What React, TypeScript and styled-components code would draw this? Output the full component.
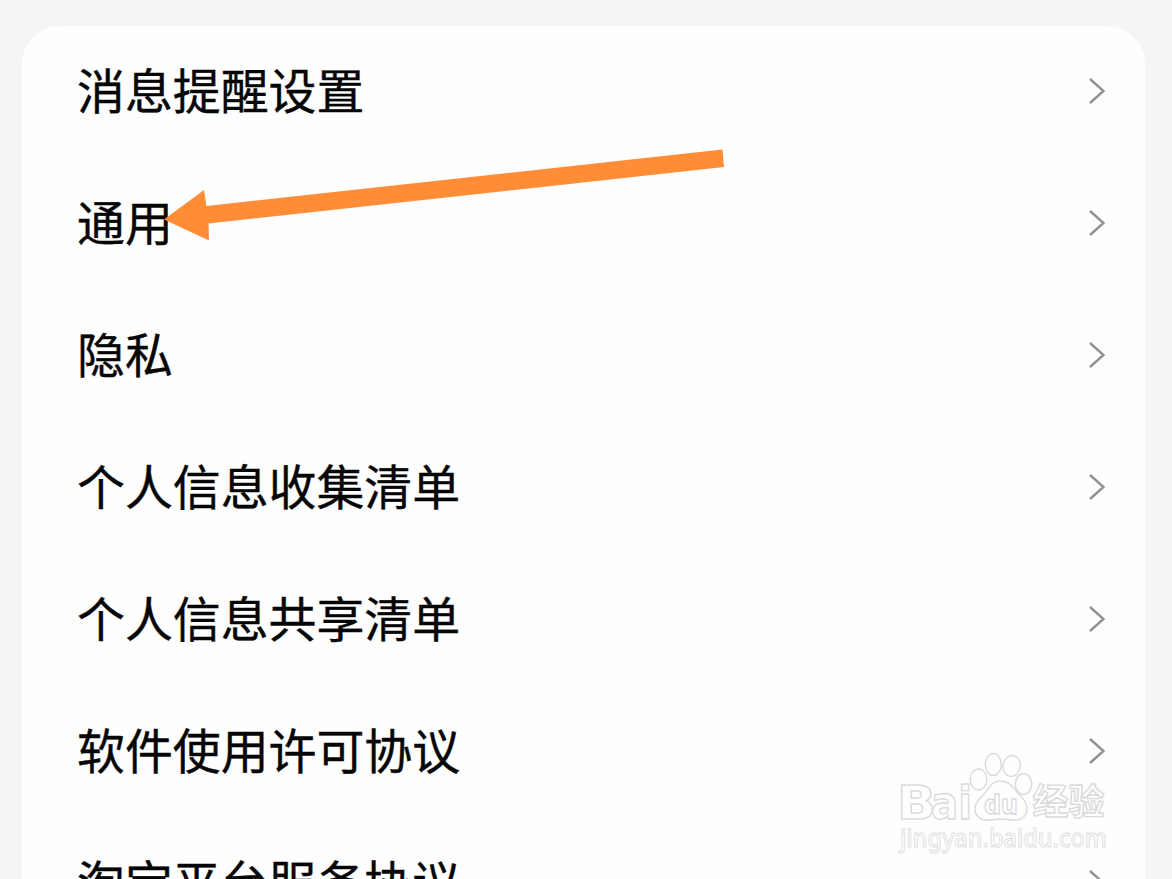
import React from "react";
import styled, { createGlobalStyle } from "styled-components";

const GlobalStyle = createGlobalStyle`
  body {
    margin: 0;
    background-color: #f5f5f5;
  }
`

const Root = styled.div`
  position: relative;
  box-sizing: border-box;
  width: 1172px;
  height: 879px;
  padding: 26px 27px 0 22px;
  overflow: hidden;
  background-color: #f5f5f5;
  font-family: "Noto Sans CJK SC", sans-serif;
`

const Card = styled.div`
  height: 1000px;
  border-radius: 38px 38px 0 0;
  background-color: #fefefe;
`

const Row = styled.div`
  display: flex;
  align-items: center;
  justify-content: space-between;
  box-sizing: border-box;
  height: 132px;
  padding: 0 39px 2px 55px;
`

const Label = styled.span`
  margin-bottom: 6px;
  color: #060606;
  font-size: 47.9px;
  line-height: 72px;
  white-space: nowrap;
  -webkit-text-stroke: 0.4px #060606;
`

const Chevron = styled.svg`
  display: block;
  width: 18px;
  height: 28px;
  fill: none;
  stroke: #929292;
  stroke-width: 2.4;
`

const Arrow = styled.svg`
  position: absolute;
  left: 160px;
  top: 140px;
  width: 570px;
  height: 110px;
  fill: #ff8c37;
`

const Watermark = styled.svg`
  position: absolute;
  left: 890px;
  top: 745px;
  width: 225px;
  height: 115px;
  fill: #fefefe;
  stroke: #dadada;
  stroke-width: 1.4;
`

const LogoText = styled.text<{ $size: number; $cjk?: boolean }>`
  font-family: ${(p) => (p.$cjk ? '"Noto Sans CJK SC"' : '"DejaVu Sans"')}, sans-serif;
  font-size: ${(p) => p.$size}px;
  font-weight: bold;
`

const SiteText = styled.text`
  font-family: "Noto Sans", sans-serif;
  font-size: 25px;
  font-weight: 500;
  stroke: #dedede;
  stroke-width: 1;
`

const items = [
  "消息提醒设置",
  "通用",
  "隐私",
  "个人信息收集清单",
  "个人信息共享清单",
  "软件使用许可协议",
  "淘宝平台服务协议",
]

const BaiduWatermark = () => (
  <Watermark viewBox="890 745 225 115">
    <LogoText $size={47} x="897" y="818.5" textLength="39" lengthAdjust="spacingAndGlyphs">B</LogoText>
    <LogoText $size={46} x="931" y="818.5" textLength="41" lengthAdjust="spacingAndGlyphs">ai</LogoText>
    <ellipse cx="978.5" cy="779.5" rx="8.3" ry="10.5" />
    <ellipse cx="993.3" cy="764.5" rx="8" ry="11" />
    <ellipse cx="1011.7" cy="766" rx="8.6" ry="10.5" transform="rotate(8 1011.7 766)" />
    <ellipse cx="1023.5" cy="784" rx="8.2" ry="10.3" />
    <path d="M1000 781C991 781 989 789 984 794C979 799 975 803 975 809C975 816 980 820 987 820C993 820 996 819 1001 819C1006 819 1010 820 1016 820C1023 820 1027 815 1027 808C1027 801 1021 797 1017 792C1012 786 1009 781 1000 781Z" />
    <LogoText $size={27} x="984" y="813.5" textLength="34" lengthAdjust="spacingAndGlyphs">du</LogoText>
    <LogoText $size={36} $cjk x="1032.5" y="815" textLength="72">经验</LogoText>
    <SiteText x="900" y="846.5" textLength="207" lengthAdjust="spacingAndGlyphs">jingyan.baidu.com</SiteText>
  </Watermark>
)

export default function App() {
  return <>
    <GlobalStyle />
    <Root>
      <Card>
        {items.map((item) => (
          <Row key={item}>
            <Label>{item}</Label>
            <Chevron viewBox="0 0 18 28">
              <path d="M2 2L15.5 14L2 26" />
            </Chevron>
          </Row>
        ))}
      </Card>
      <Arrow viewBox="160 140 570 110">
        <path d="M164 219.5L204 190L206.5 206L722.5 149.5L724 167L208.5 223.5L209 240.5Z" />
      </Arrow>
      <BaiduWatermark />
    </Root>
  </>
}
